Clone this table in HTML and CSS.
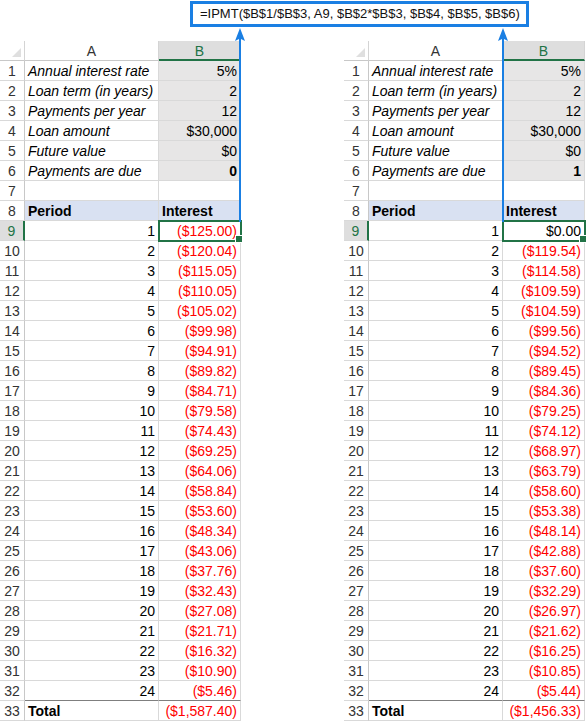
FILE: index.html
```html
<!DOCTYPE html>
<html>
<head>
<meta charset="utf-8">
<link rel="stylesheet" href="styles.css">
</head>
<body>
<div class="page">
  <div class="formula-row">
    <div class="formula">=IPMT($B$1/$B$3, A9, $B$2*$B$3, $B$4, $B$5, $B$6)</div>
  </div>
  <div class="sheets">
    <div class="sheet">
      <div class="corner"><span class="tri"></span></div><div class="ch">A</div><div class="ch sel">B</div>
      <div class="rh">1</div><div class="c it">Annual interest rate</div><div class="c n g">5%</div>
      <div class="rh">2</div><div class="c it">Loan term (in years)</div><div class="c n g">2</div>
      <div class="rh">3</div><div class="c it">Payments per year</div><div class="c n g">12</div>
      <div class="rh">4</div><div class="c it">Loan amount</div><div class="c n g">$30,000</div>
      <div class="rh">5</div><div class="c it">Future value</div><div class="c n g">$0</div>
      <div class="rh">6</div><div class="c it">Payments are due</div><div class="c n g b">0</div>
      <div class="rh">7</div><div class="c"></div><div class="c"></div>
      <div class="rh">8</div><div class="c hd b">Period</div><div class="c hd b">Interest</div>
      <div class="rh sel">9</div><div class="c n">1</div><div class="c n r active">($125.00)</div>
      <div class="rh">10</div><div class="c n">2</div><div class="c n r">($120.04)</div>
      <div class="rh">11</div><div class="c n">3</div><div class="c n r">($115.05)</div>
      <div class="rh">12</div><div class="c n">4</div><div class="c n r">($110.05)</div>
      <div class="rh">13</div><div class="c n">5</div><div class="c n r">($105.02)</div>
      <div class="rh">14</div><div class="c n">6</div><div class="c n r">($99.98)</div>
      <div class="rh">15</div><div class="c n">7</div><div class="c n r">($94.91)</div>
      <div class="rh">16</div><div class="c n">8</div><div class="c n r">($89.82)</div>
      <div class="rh">17</div><div class="c n">9</div><div class="c n r">($84.71)</div>
      <div class="rh">18</div><div class="c n">10</div><div class="c n r">($79.58)</div>
      <div class="rh">19</div><div class="c n">11</div><div class="c n r">($74.43)</div>
      <div class="rh">20</div><div class="c n">12</div><div class="c n r">($69.25)</div>
      <div class="rh">21</div><div class="c n">13</div><div class="c n r">($64.06)</div>
      <div class="rh">22</div><div class="c n">14</div><div class="c n r">($58.84)</div>
      <div class="rh">23</div><div class="c n">15</div><div class="c n r">($53.60)</div>
      <div class="rh">24</div><div class="c n">16</div><div class="c n r">($48.34)</div>
      <div class="rh">25</div><div class="c n">17</div><div class="c n r">($43.06)</div>
      <div class="rh">26</div><div class="c n">18</div><div class="c n r">($37.76)</div>
      <div class="rh">27</div><div class="c n">19</div><div class="c n r">($32.43)</div>
      <div class="rh">28</div><div class="c n">20</div><div class="c n r">($27.08)</div>
      <div class="rh">29</div><div class="c n">21</div><div class="c n r">($21.71)</div>
      <div class="rh">30</div><div class="c n">22</div><div class="c n r">($16.32)</div>
      <div class="rh">31</div><div class="c n">23</div><div class="c n r">($10.90)</div>
      <div class="rh">32</div><div class="c n pre">24</div><div class="c n r pre">($5.46)</div>
      <div class="rh">33</div><div class="c b">Total</div><div class="c n r">($1,587.40)</div>
      <svg class="arrow" width="12" height="194" viewBox="0 0 12 194"><path d="M6 0 L11 13 L7 11 L7 194 L5 194 L5 11 L1 13 Z" fill="#1a7fe3"/></svg>
    </div>
    <div class="sheet">
      <div class="corner"><span class="tri"></span></div><div class="ch">A</div><div class="ch sel">B</div>
      <div class="rh">1</div><div class="c it">Annual interest rate</div><div class="c n g">5%</div>
      <div class="rh">2</div><div class="c it">Loan term (in years)</div><div class="c n g">2</div>
      <div class="rh">3</div><div class="c it">Payments per year</div><div class="c n g">12</div>
      <div class="rh">4</div><div class="c it">Loan amount</div><div class="c n g">$30,000</div>
      <div class="rh">5</div><div class="c it">Future value</div><div class="c n g">$0</div>
      <div class="rh">6</div><div class="c it">Payments are due</div><div class="c n g b">1</div>
      <div class="rh">7</div><div class="c"></div><div class="c"></div>
      <div class="rh">8</div><div class="c hd b">Period</div><div class="c hd b">Interest</div>
      <div class="rh sel">9</div><div class="c n">1</div><div class="c n active">$0.00</div>
      <div class="rh">10</div><div class="c n">2</div><div class="c n r">($119.54)</div>
      <div class="rh">11</div><div class="c n">3</div><div class="c n r">($114.58)</div>
      <div class="rh">12</div><div class="c n">4</div><div class="c n r">($109.59)</div>
      <div class="rh">13</div><div class="c n">5</div><div class="c n r">($104.59)</div>
      <div class="rh">14</div><div class="c n">6</div><div class="c n r">($99.56)</div>
      <div class="rh">15</div><div class="c n">7</div><div class="c n r">($94.52)</div>
      <div class="rh">16</div><div class="c n">8</div><div class="c n r">($89.45)</div>
      <div class="rh">17</div><div class="c n">9</div><div class="c n r">($84.36)</div>
      <div class="rh">18</div><div class="c n">10</div><div class="c n r">($79.25)</div>
      <div class="rh">19</div><div class="c n">11</div><div class="c n r">($74.12)</div>
      <div class="rh">20</div><div class="c n">12</div><div class="c n r">($68.97)</div>
      <div class="rh">21</div><div class="c n">13</div><div class="c n r">($63.79)</div>
      <div class="rh">22</div><div class="c n">14</div><div class="c n r">($58.60)</div>
      <div class="rh">23</div><div class="c n">15</div><div class="c n r">($53.38)</div>
      <div class="rh">24</div><div class="c n">16</div><div class="c n r">($48.14)</div>
      <div class="rh">25</div><div class="c n">17</div><div class="c n r">($42.88)</div>
      <div class="rh">26</div><div class="c n">18</div><div class="c n r">($37.60)</div>
      <div class="rh">27</div><div class="c n">19</div><div class="c n r">($32.29)</div>
      <div class="rh">28</div><div class="c n">20</div><div class="c n r">($26.97)</div>
      <div class="rh">29</div><div class="c n">21</div><div class="c n r">($21.62)</div>
      <div class="rh">30</div><div class="c n">22</div><div class="c n r">($16.25)</div>
      <div class="rh">31</div><div class="c n">23</div><div class="c n r">($10.85)</div>
      <div class="rh">32</div><div class="c n pre">24</div><div class="c n r pre">($5.44)</div>
      <div class="rh">33</div><div class="c b">Total</div><div class="c n r">($1,456.33)</div>
      <svg class="arrow arrow-right" width="12" height="194" viewBox="0 0 12 194"><path d="M6 0 L11 13 L7 11 L7 194 L5 194 L5 11 L1 13 Z" fill="#1a7fe3"/></svg>
    </div>
  </div>
</div>
</body>
</html>
```

FILE: styles.css
```css
* { box-sizing: border-box; }
html, body { margin: 0; padding: 0; background: #fff; }
body {
  font-family: "Liberation Sans", Arial, sans-serif;
  font-size: 14px;
  color: #000;
  width: 586px;
  height: 723px;
  overflow: hidden;
}
.page { position: relative; }
.formula-row {
  padding-left: 190px;
  padding-top: 1px;
  height: 41px;
}
.formula {
  width: 339px;
  height: 26px;
  border: 3px solid #1a7fe3;
  padding-left: 7px;
  line-height: 20px;
  font-size: 13px;
  color: #111;
  white-space: nowrap;
}
.sheets {
  display: flex;
  gap: 103px;
}
.sheet {
  position: relative;
  display: grid;
  grid-template-columns: 25px 134px 82px;
  grid-auto-rows: 20px;
}
.corner {
  position: relative;
  border-right: 1px solid #d4d4d4;
  border-bottom: 1px solid #c8c8c8;
}
.tri {
  position: absolute;
  right: 3px;
  bottom: 3px;
  width: 0;
  height: 0;
  border-left: 9px solid transparent;
  border-bottom: 9px solid #dfdfdf;
}
.ch {
  text-align: center;
  line-height: 19px;
  padding-top: 1px;
  color: #333;
  border-right: 1px solid #d4d4d4;
  border-bottom: 1px solid #c8c8c8;
}
.ch.sel {
  background: #dedede;
  color: #217346;
  border-bottom: 2px solid #217346;
}
.rh {
  text-align: center;
  line-height: 19px;
  padding-top: 1px;
  color: #333;
  border-right: 1px solid #c8c8c8;
  border-bottom: 1px solid #d9d9d9;
}
.rh.sel {
  background: #dedede;
  color: #217346;
  border-right: 2px solid #217346;
}
.c {
  line-height: 19px;
  padding: 1px 3px 0;
  white-space: nowrap;
  border-right: 1px solid #d9d9d9;
  border-bottom: 1px solid #d9d9d9;
}
.it { font-style: italic; }
.n { text-align: right; }
.g { background: #e7e6e6; }
.b { font-weight: bold; }
.hd { background: #d9e1f2; }
.r { color: #ff0000; }
.pre { border-bottom-color: #7f7f7f; }
.active {
  position: relative;
  outline: 2px solid #217346;
  outline-offset: -1px;
}
.active::after {
  content: "";
  position: absolute;
  right: -3px;
  bottom: -3px;
  width: 6px;
  height: 6px;
  background: #217346;
  border: 1px solid #fff;
}
.arrow {
  position: absolute;
  top: -13px;
  left: 234px;
}
.arrow-right {
  left: 153px;
}
```
